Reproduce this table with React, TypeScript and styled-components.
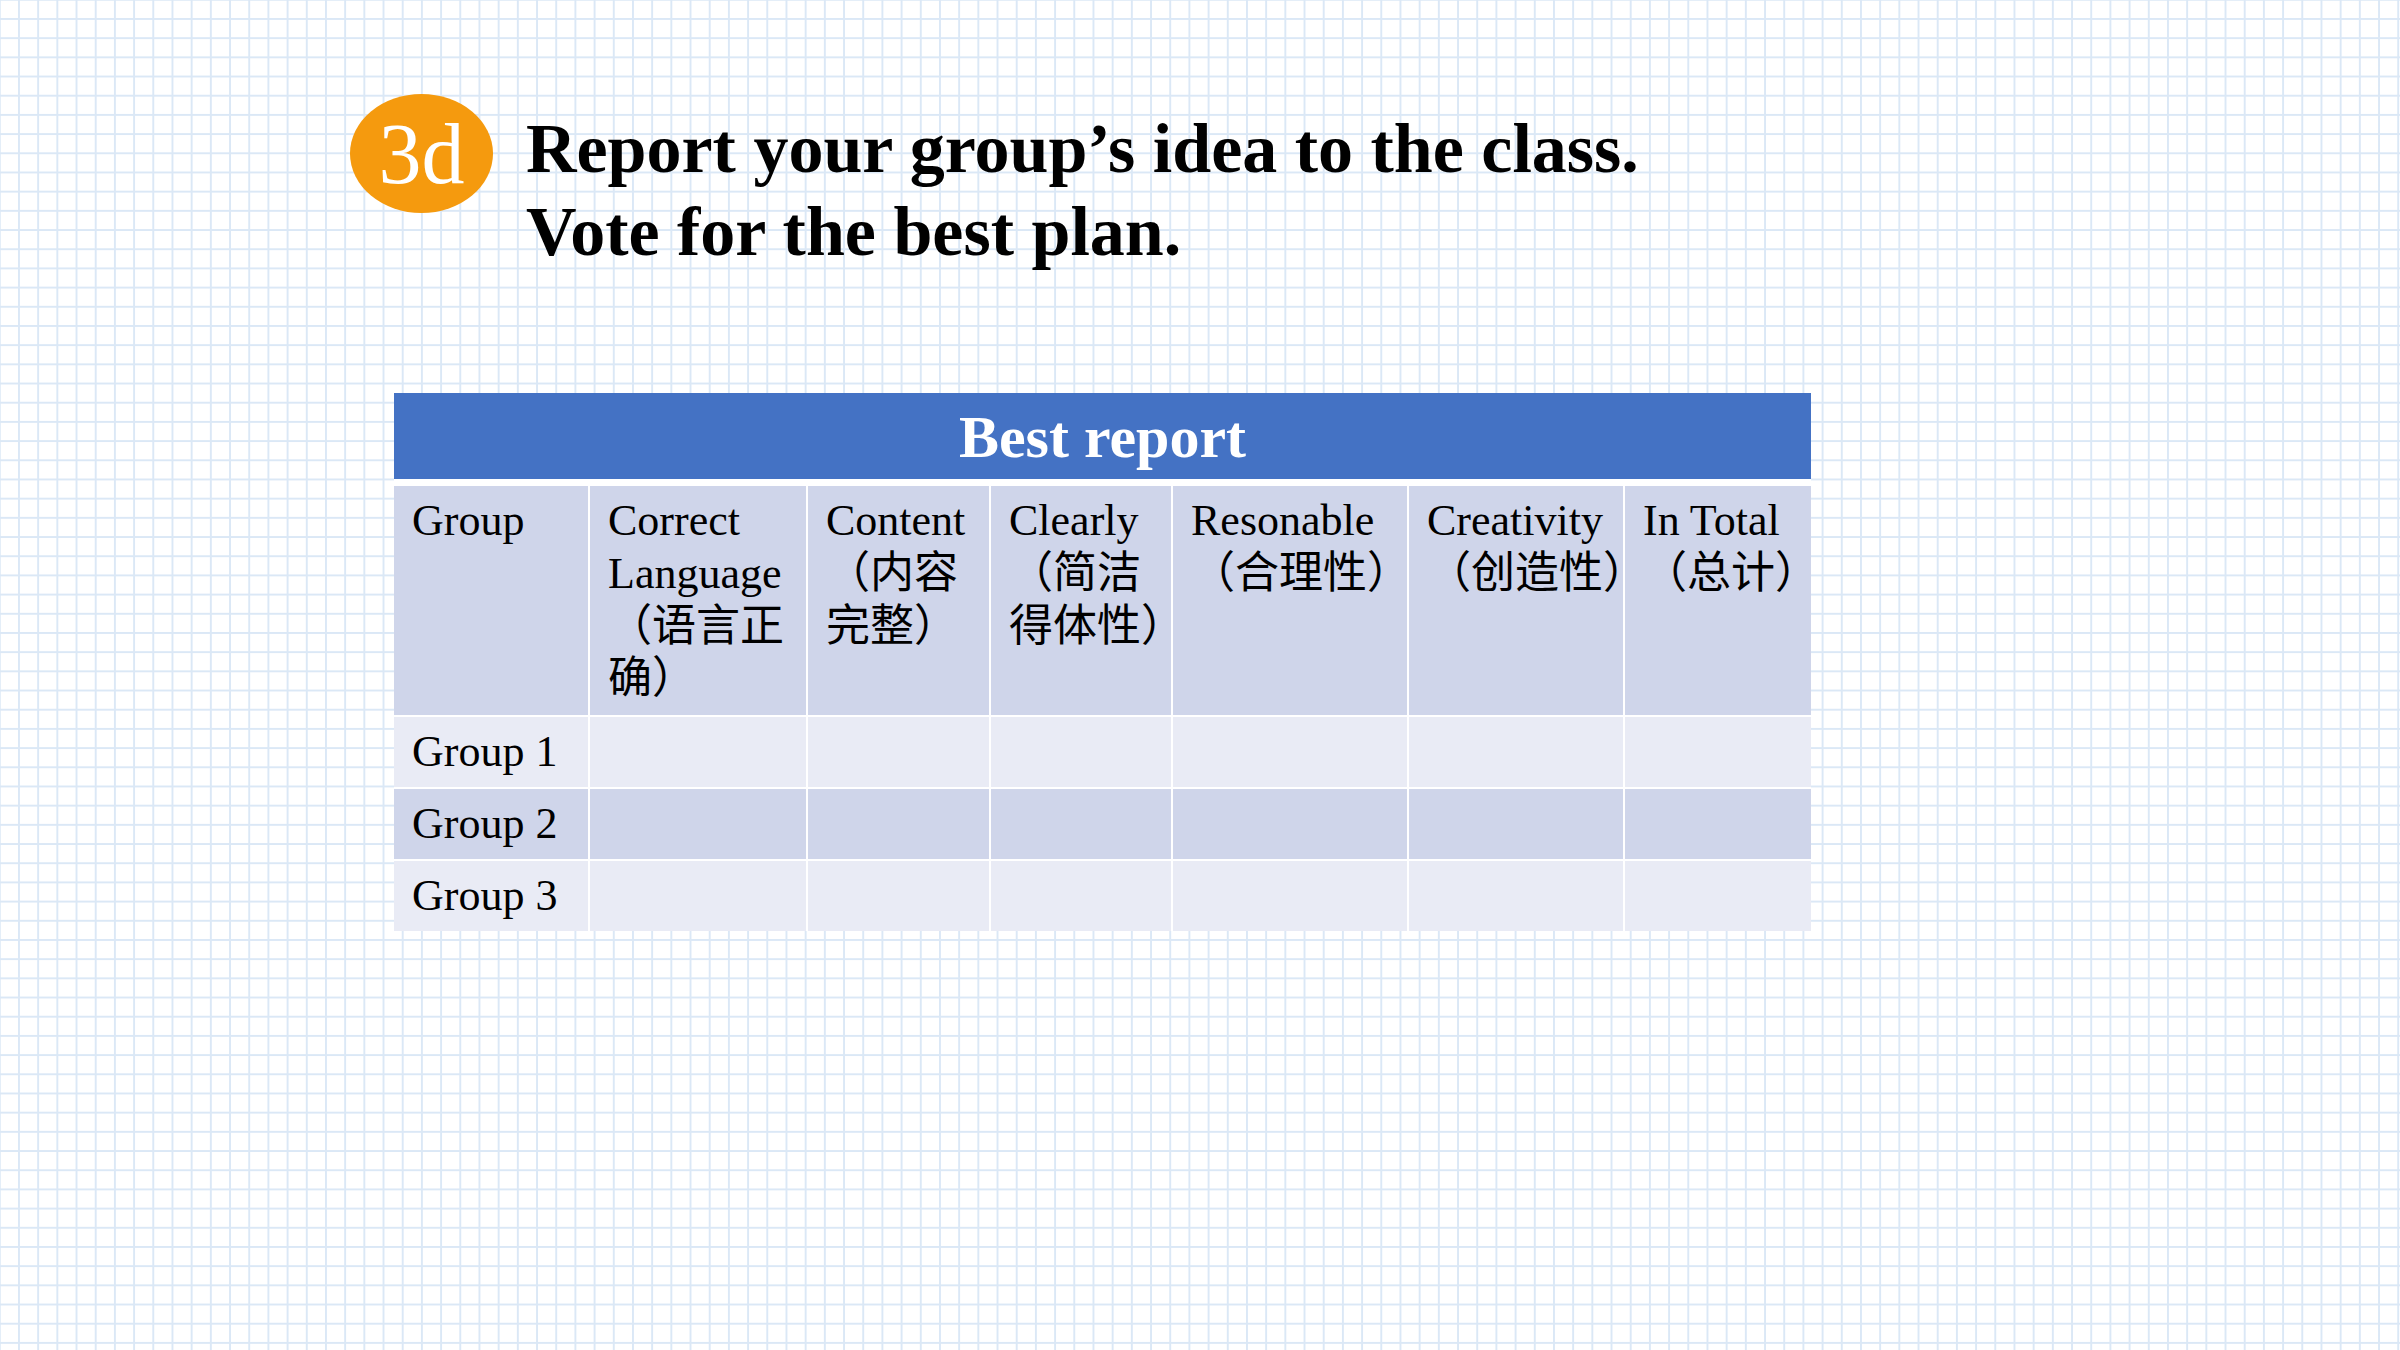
import React from "react";
import styled, { createGlobalStyle } from "styled-components";

const GlobalStyle = createGlobalStyle`
  html, body {
    margin: 0;
    padding: 0;
  }
  body {
    width: 2400px;
    height: 1350px;
    overflow: hidden;
    background-color: #ffffff;
    background-image:
      linear-gradient(to right, #dbe8f6 0, #dbe8f6 2px, transparent 2px),
      linear-gradient(to bottom, #dbe8f6 0, #dbe8f6 2px, transparent 2px);
    background-size: 19.2px 19.2px;
    background-position: 18px 18px;
  }
`;

const Slide = styled.main`
  width: 2400px;
  height: 1350px;
  box-sizing: border-box;
  padding: 94px 0 0 350px;
  display: flex;
  flex-direction: column;
  align-items: flex-start;
  font-family: "Liberation Serif", "Times New Roman", "Noto Sans CJK SC", serif;
  color: #000;
`;

const Heading = styled.header`
  display: flex;
  align-items: flex-start;
  gap: 33px;
  height: 180px;
`;

const Badge = styled.div`
  width: 143px;
  height: 119px;
  flex-shrink: 0;
  border-radius: 50%;
  background: #f59a0e;
  color: #ffffff;
  display: flex;
  align-items: center;
  justify-content: center;
  font-family: "Liberation Serif", "Times New Roman", serif;
  font-size: 86px;
  line-height: 1;
`;

const Instructions = styled.h1`
  margin: 13px 0 0;
  font-size: 70px;
  line-height: 83px;
  font-weight: 700;
  white-space: nowrap;
`;

const ScoreTable = styled.section`
  margin: 119px 0 0 44px;
  width: 1417px;
  display: grid;
  grid-template-columns: 194px 216px 181px 180px 234px 214px 186px;
  gap: 2px;
  background: #ffffff;
`;

const Banner = styled.div`
  grid-column: 1 / -1;
  height: 86px;
  margin-bottom: 5px;
  padding-top: 2px;
  box-sizing: border-box;
  background: #4472c4;
  color: #ffffff;
  display: flex;
  align-items: center;
  justify-content: center;
  font-size: 60px;
  font-weight: 700;
  line-height: 1.2;
`;

const Cell = styled.div<{ $tone: "dark" | "light"; $middle?: boolean }>`
  box-sizing: border-box;
  min-width: 0;
  padding: 9px 18px;
  height: ${(p) => (p.$middle ? "70px" : "auto")};
  background: ${(p) => (p.$tone === "dark" ? "#cfd5ea" : "#e9ebf5")};
  display: flex;
  flex-direction: column;
  justify-content: ${(p) => (p.$middle ? "center" : "flex-start")};
  font-size: 44px;
`;

const Line = styled.span`
  display: block;
  height: 52.8px;
  line-height: 52.8px;
  white-space: nowrap;
`;

const headers: string[][] = [
  ["Group"],
  ["Correct", "Language", "（语言正", "确）"],
  ["Content", "（内容", "完整）"],
  ["Clearly", "（简洁", "得体性）"],
  ["Resonable", "（合理性）"],
  ["Creativity", "（创造性）"],
  ["In Total", "（总计）"],
];

const groups = ["Group 1", "Group 2", "Group 3"];

export default function App() {
  return (
    <>
      <GlobalStyle />
      <Slide>
        <Heading>
          <Badge>3d</Badge>
          <Instructions>
            Report your group’s idea to the class.
            <br />
            Vote for the best plan.
          </Instructions>
        </Heading>
        <ScoreTable>
          <Banner>Best report</Banner>
          {headers.map((lines, i) => (
            <Cell key={`h${i}`} $tone="dark">
              {lines.map((l, j) => (
                <Line key={j}>{l}</Line>
              ))}
            </Cell>
          ))}
          {groups.map((g, r) => {
            const tone = r % 2 === 0 ? "light" : "dark";
            return (
              <React.Fragment key={g}>
                <Cell $tone={tone} $middle>
                  <Line>{g}</Line>
                </Cell>
                {headers.slice(1).map((_, c) => (
                  <Cell key={c} $tone={tone} $middle />
                ))}
              </React.Fragment>
            );
          })}
        </ScoreTable>
      </Slide>
    </>
  );
}
